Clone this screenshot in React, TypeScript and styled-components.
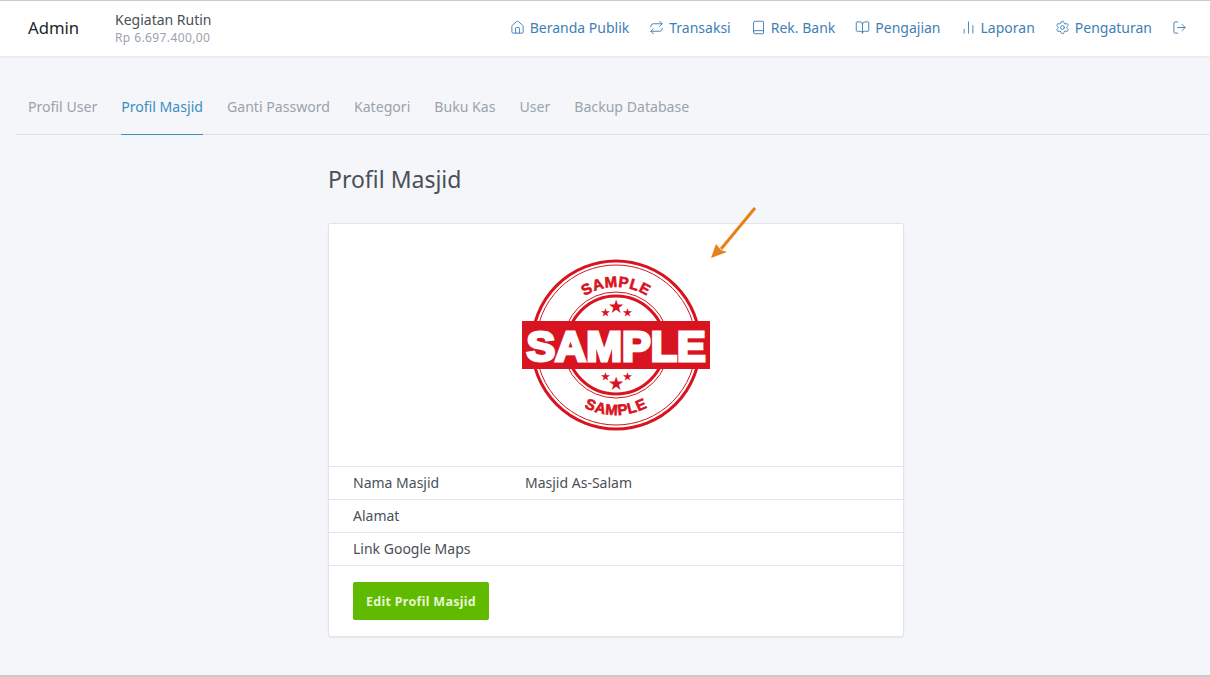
import styled, { createGlobalStyle } from "styled-components";
import { BarChart2, Book, BookOpen, Home, LogOut, Repeat, Settings } from "lucide-react";

const GlobalStyle = createGlobalStyle`
  html, body {
    margin: 0;
    padding: 0;
    background: #f4f6f9;
  }
  body {
    font-family: "Noto Sans", "DejaVu Sans", sans-serif;
    color: #4a5058;
  }
`;

const Page = styled.div`
  position: relative;
  box-sizing: border-box;
  height: 677px;
  overflow: hidden;
  border-top: 1px solid #c9c9c9;
  border-bottom: 2px solid #c9c9c9;
`;

const TopBar = styled.header`
  display: flex;
  align-items: center;
  box-sizing: border-box;
  height: 55px;
  padding: 0 23px 2px 28px;
  background: #fff;
  box-shadow: 0 1px 3px rgba(0, 0, 0, 0.08);
`;

const Brand = styled.div`
  width: 87px;
  font-size: 16.7px;
  color: #22262b;
`;

const Org = styled.div`
  display: flex;
  flex-direction: column;
  gap: 2px;
`;

const OrgName = styled.div`
  font-size: 14px;
  line-height: 17px;
  color: #4a5058;
`;

const OrgBalance = styled.div`
  font-size: 12px;
  line-height: 15px;
  letter-spacing: 0.4px;
  color: #9aa3ad;
`;

const Nav = styled.nav`
  display: flex;
  align-items: center;
  gap: 20px;
  margin-left: auto;
`;

const NavLink = styled.a`
  display: flex;
  align-items: center;
  gap: 5px;
  font-size: 14px;
  color: #3f7fb5;
`;

const Tabs = styled.div`
  display: flex;
  gap: 24px;
  height: 78px;
  margin: 0 0 0 16px;
  padding-left: 12px;
  border-bottom: 1px solid #dfe3e8;
`;

const Tab = styled.a<{ $active?: boolean }>`
  display: flex;
  align-items: center;
  height: 79px;
  padding-top: 22px;
  box-sizing: border-box;
  font-size: 14.1px;
  color: ${(p) => (p.$active ? "#3a8fc0" : "#9aa3ad")};
  border-bottom: 1px solid ${(p) => (p.$active ? "#3a8fc0" : "transparent")};
`;

const Content = styled.main`
  width: 576px;
  margin: 0 auto;
  transform: translateX(11px);
`;

const Title = styled.h1`
  margin: 29px 0 29px;
  font-size: 23px;
  line-height: 30px;
  font-weight: 400;
  color: #4a5058;
`;

const Card = styled.section`
  box-sizing: border-box;
  height: 414px;
  background: #fff;
  border: 1px solid #e1e4e8;
  border-radius: 3px;
  box-shadow: 0 1px 2px rgba(0, 0, 0, 0.06);
`;

const LogoWrap = styled.div`
  display: flex;
  justify-content: center;
  height: 242px;
  padding-top: 35px;
  box-sizing: border-box;
`;

const Row = styled.div`
  display: flex;
  align-items: center;
  height: 33px;
  box-sizing: border-box;
  padding: 0 0 2px 24px;
  border-top: 1px solid #e3e6ea;
  font-size: 14px;
`;

const RowLabel = styled.div`
  width: 172px;
`;

const Actions = styled.div`
  border-top: 1px solid #e3e6ea;
  padding: 16px 24px;
`;

const EditButton = styled.button`
  width: 136px;
  height: 38px;
  padding: 0;
  border: 0;
  border-radius: 2px;
  background: #5fba00;
  color: #e6f6d2;
  font-family: inherit;
  font-size: 12.5px;
  font-weight: 700;
  letter-spacing: 0.3px;
`;

const ArrowMark = styled.svg`
  position: absolute;
  left: 706px;
  top: 202px;
`;

const navItems = [
  { icon: Home, label: "Beranda Publik" },
  { icon: Repeat, label: "Transaksi" },
  { icon: Book, label: "Rek. Bank" },
  { icon: BookOpen, label: "Pengajian" },
  { icon: BarChart2, label: "Laporan" },
  { icon: Settings, label: "Pengaturan" },
];

const tabItems = ["Profil User", "Profil Masjid", "Ganti Password", "Kategori", "Buku Kas", "User", "Backup Database"];

const SampleLogo = () => (
  <svg width="190" height="172" viewBox="0 0 190 172">
    <defs>
      <path id="arcTop" d="M 37 86 A 58 58 0 0 1 153 86" />
      <path id="arcBottom" d="M 25 86 A 70 70 0 0 0 165 86" />
    </defs>
    <g fill="none" stroke="#d7141f">
      <circle cx="95" cy="86" r="84" strokeWidth="3" />
      <circle cx="95" cy="86" r="80" strokeWidth="1" />
      <circle cx="95" cy="86" r="53" strokeWidth="1" />
      <circle cx="95" cy="86" r="49" strokeWidth="3" />
    </g>
    <g fill="#d7141f" fontFamily="'Liberation Sans', sans-serif" fontWeight="700" fontSize="15">
      <text textAnchor="middle" stroke="#d7141f" strokeWidth="0.6" letterSpacing="0.6">
        <textPath href="#arcTop" startOffset="50%">SAMPLE</textPath>
      </text>
      <text textAnchor="middle" stroke="#d7141f" strokeWidth="0.6" letterSpacing="0.6">
        <textPath href="#arcBottom" startOffset="50%">SAMPLE</textPath>
      </text>
      <text x="95" y="53" textAnchor="middle" fontSize="16">★</text>
      <text x="84" y="57" textAnchor="middle" fontSize="10">★</text>
      <text x="106" y="57" textAnchor="middle" fontSize="10">★</text>
      <text x="95" y="130" textAnchor="middle" fontSize="16">★</text>
      <text x="84" y="121" textAnchor="middle" fontSize="10">★</text>
      <text x="106" y="121" textAnchor="middle" fontSize="10">★</text>
    </g>
    <rect x="1" y="62" width="188" height="48" fill="#d7141f" />
    <text
      x="95"
      y="102"
      textAnchor="middle"
      fill="#fff"
      stroke="#fff"
      strokeWidth="3"
      fontFamily="'Liberation Sans', sans-serif"
      fontWeight="700"
      fontSize="43"
    >
      SAMPLE
    </text>
  </svg>
);

export default function App() {
  return (
    <Page>
      <GlobalStyle />
      <TopBar>
        <Brand>Admin</Brand>
        <Org>
          <OrgName>Kegiatan Rutin</OrgName>
          <OrgBalance>Rp 6.697.400,00</OrgBalance>
        </Org>
        <Nav>
          {navItems.map(({ icon: Icon, label }) => (
            <NavLink key={label}>
              <Icon size={15} strokeWidth={1.5} />
              {label}
            </NavLink>
          ))}
          <NavLink>
            <LogOut size={15} strokeWidth={1.5} />
          </NavLink>
        </Nav>
      </TopBar>
      <Tabs>
        {tabItems.map((t) => (
          <Tab key={t} $active={t === "Profil Masjid"}>
            {t}
          </Tab>
        ))}
      </Tabs>
      <Content>
        <Title>Profil Masjid</Title>
        <Card>
          <LogoWrap>
            <SampleLogo />
          </LogoWrap>
          <Row>
            <RowLabel>Nama Masjid</RowLabel>
            Masjid As-Salam
          </Row>
          <Row>
            <RowLabel>Alamat</RowLabel>
          </Row>
          <Row>
            <RowLabel>Link Google Maps</RowLabel>
          </Row>
          <Actions>
            <EditButton>Edit Profil Masjid</EditButton>
          </Actions>
        </Card>
      </Content>
      <ArrowMark width="52" height="58" viewBox="0 0 52 58">
        <path d="M49 5 L15 46" stroke="#e8801a" strokeWidth="3" fill="none" />
        <path d="M5 55 L10 41 L15 47 L21 49 Z" fill="#e8801a" />
      </ArrowMark>
    </Page>
  );
}
